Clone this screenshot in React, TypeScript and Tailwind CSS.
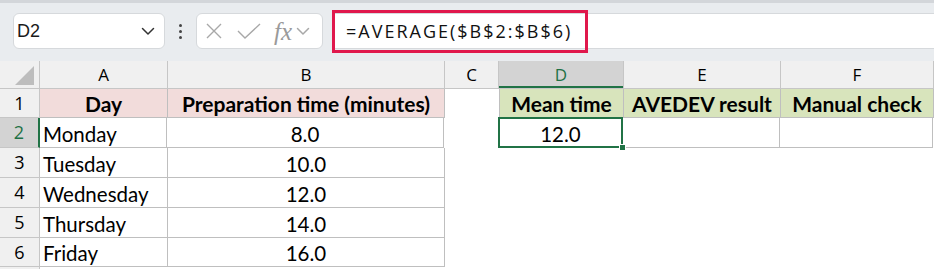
import React from 'react';

const cols = [
  { key: 'A', w: 'w-[128px]' },
  { key: 'B', w: 'w-[277px]' },
  { key: 'C', w: 'w-[54px]' },
  { key: 'D', w: 'w-[125px]' },
  { key: 'E', w: 'w-[157px]' },
  { key: 'F', w: 'w-[153px]' },
];

const days = [
  ['Monday', '8.0'],
  ['Tuesday', '10.0'],
  ['Wednesday', '12.0'],
  ['Thursday', '14.0'],
  ['Friday', '16.0'],
];

const rowHeights = ['h-[30px]', 'h-[30px]', 'h-[30px]', 'h-[30px]', 'h-[29px]'];

const Chevron: React.FC<{ className?: string }> = ({ className }) => (
  <svg className={className} width="14" height="9" viewBox="0 0 14 9" fill="none">
    <path d="M1.5 1.5 L7 7 L12.5 1.5" stroke="currentColor" strokeWidth="1.5" strokeLinecap="round" strokeLinejoin="round" />
  </svg>
);

const FormulaBar: React.FC = () => (
  <div className="h-[61px] bg-[#e9ecef] border-t-[3px] border-[#d3d6da] flex items-start pt-[10px] relative">
    {/* name box */}
    <div className="ml-[13px] w-[152px] h-[36px] bg-white rounded-[6px] border border-[#d6d9dc] flex items-center justify-between pl-[3px] pr-[9px]">
      <span className="text-[18px] text-[#1a1a1a]" style={{ fontFamily: '"Liberation Sans", sans-serif' }}>D2</span>
      <Chevron className="text-[#333]" />
    </div>
    {/* dots */}
    <div className="w-[31px] h-[36px] flex flex-col items-center justify-center gap-[3px]">
      <span className="w-[3px] h-[3px] rounded-full bg-[#444]" />
      <span className="w-[3px] h-[3px] rounded-full bg-[#444]" />
      <span className="w-[3px] h-[3px] rounded-full bg-[#444]" />
    </div>
    {/* cancel / enter / fx */}
    <div className="w-[127px] h-[36px] bg-white rounded-[6px] border border-[#d6d9dc] flex items-center pl-[8px] text-[#a8a8a8]">
      <svg width="18" height="18" viewBox="0 0 18 18" fill="none">
        <path d="M2 2 L16 16 M16 2 L2 16" stroke="currentColor" strokeWidth="1.4" />
      </svg>
      <svg className="ml-[14px]" width="24" height="18" viewBox="0 0 24 18" fill="none">
        <path d="M1 9 L8 16 L23 2" stroke="currentColor" strokeWidth="1.4" />
      </svg>
      <span className="ml-[13px] text-[25px] italic leading-none text-[#9a9a9a]" style={{ fontFamily: '"Liberation Serif", serif' }}>fx</span>
      <Chevron className="ml-[4px] text-[#a8a8a8]" />
    </div>
    {/* formula input */}
    <div className="ml-[10px] flex-1 h-[36px] bg-white border-y border-[#d6d9dc] flex items-center">
      <div className="-ml-px w-[256px] h-[43px] border-[3px] border-[#e0184c] flex items-center pl-[11px]">
        <span className="text-[18px] tracking-[2px] text-[#111]" style={{ fontFamily: '"Open Sans", sans-serif' }}>=AVERAGE($B$2:$B$6)</span>
      </div>
    </div>
  </div>
);

const HeaderRow: React.FC = () => (
  <div className="flex h-[28px] bg-[#f0f0f0] border-b border-[#c6c6c6]" style={{ fontFamily: '"Open Sans", sans-serif' }}>
    <div className="w-[40px] border-r border-[#c6c6c6] flex items-end justify-end pr-[5px] pb-[3px]">
      <div className="w-0 h-0 border-l-[19px] border-l-transparent border-b-[19px] border-b-[#bdbdbd]" />
    </div>
    {cols.map((c) => (
      <div
        key={c.key}
        className={`${c.w} flex items-center justify-center text-[17px] border-r ${
          c.key === 'D'
            ? 'bg-[#d3d3d3] text-[#1e7145] border-[#c6c6c6] shadow-[inset_0_-2px_0_#217346]'
            : 'text-black border-[#c6c6c6]'
        }`}
      >
        {c.key}
      </div>
    ))}
  </div>
);

const cellFont = { fontFamily: 'Lato, "Open Sans", sans-serif' };

const App: React.FC = () => {
  return (
    <div className="w-[934px] h-[269px] overflow-hidden bg-white">
      <FormulaBar />
      <HeaderRow />

      {/* row 1 */}
      <div className="flex h-[29px] text-[21px]" style={cellFont}>
        <div className="w-[40px] bg-[#f0f0f0] border-r border-b border-[#c6c6c6] flex items-center justify-center text-[18px]" style={{ fontFamily: '"Open Sans", sans-serif' }}>1</div>
        <div className="w-[128px] bg-[#f2dcdb] border-r border-b border-[#bfbfbf] flex items-center justify-center pt-[2px] font-bold">Day</div>
        <div className="w-[277px] bg-[#f2dcdb] border-r border-b border-[#bfbfbf] flex items-center justify-center pt-[2px] font-bold">Preparation time (minutes)</div>
        <div className="w-[54px]" />
        <div className="w-[125px] bg-[#d8e4bc] border-l border-r border-b border-[#bfbfbf] flex items-center justify-center pt-[2px] font-bold">Mean time</div>
        <div className="w-[157px] bg-[#d8e4bc] border-r border-b border-[#bfbfbf] flex items-center justify-center pt-[2px] font-bold">AVEDEV result</div>
        <div className="w-[153px] bg-[#d8e4bc] border-r border-b border-[#bfbfbf] flex items-center justify-center pt-[2px] font-bold">Manual check</div>
      </div>

      {days.map(([day, mins], i) => {
        const selected = i === 0;
        return (
          <div key={day} className={`flex ${rowHeights[i]} text-[20.5px]`} style={cellFont}>
            <div
              className={`w-[40px] border-r flex items-center justify-center text-[18px] ${
                selected
                  ? 'bg-[#d3d3d3] text-[#1e7145] border-r-[2px] border-r-[#217346] border-b border-b-[#c6c6c6]'
                  : 'bg-[#f0f0f0] text-black border-[#c6c6c6] border-b'
              }`}
              style={{ fontFamily: '"Open Sans", sans-serif' }}
            >
              {i + 2}
            </div>
            <div className={`${selected ? 'w-[127px]' : 'w-[128px]'} border-r border-b border-[#bfbfbf] flex items-center pl-[3px] pt-[3px]`}>{day}</div>
            <div className="w-[277px] border-r border-b border-[#bfbfbf] flex items-center justify-center pt-[3px]">{mins}</div>
            <div className="w-[54px]" />
            {selected && (
              <>
                <div className="w-[125px] relative border-l border-r border-b border-[#bfbfbf] flex items-center justify-center pt-[3px]">
                  12.0
                  <div className="absolute -left-px -top-px -right-px -bottom-px border-2 border-[#217346]" />
                  <div className="absolute -right-[4px] -bottom-[4px] w-[7px] h-[7px] bg-[#217346] border border-white" />
                </div>
                <div className="w-[157px] border-r border-b border-[#bfbfbf]" />
                <div className="w-[153px] border-r border-b border-[#bfbfbf]" />
              </>
            )}
          </div>
        );
      })}

      <div className="flex h-[10px]">
        <div className="w-[40px] bg-[#f0f0f0] border-r border-[#c6c6c6]" />
      </div>
    </div>
  );
};

export default App;
